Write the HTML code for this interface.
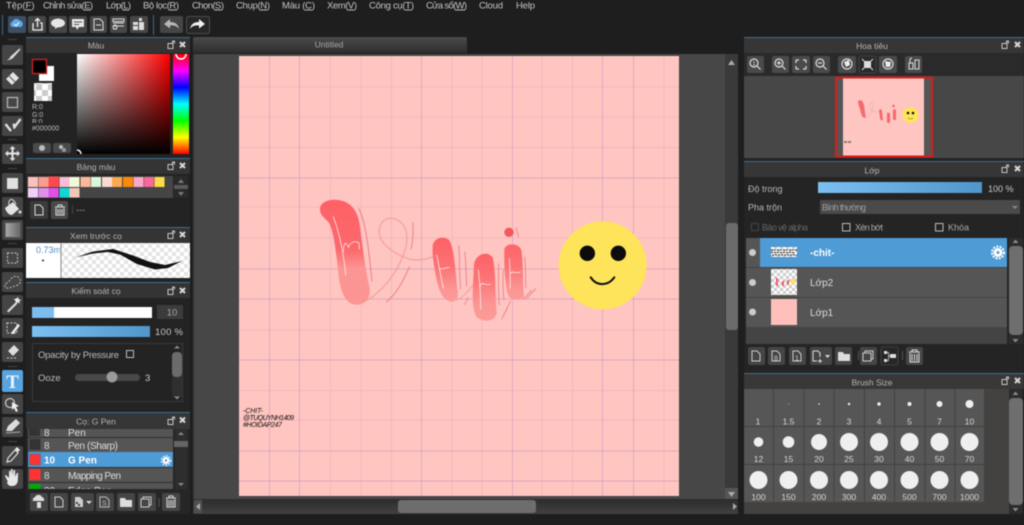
<!DOCTYPE html>
<html lang="vi"><head><meta charset="utf-8"><title>Untitled</title>
<style>
html,body{margin:0;padding:0;background:#1e1e1e;width:1024px;height:525px;overflow:hidden}
svg{display:block}
#root{filter:blur(.5px)}
text{font-family:"Liberation Sans",sans-serif;font-size:9px;fill:#bdbdbd}
.m{font-size:9.5px;fill:#c4c4c4}
.t{text-anchor:middle;fill:#b5b5b5;font-size:8.5px}
.c{text-anchor:middle;fill:#d8d8d8;font-size:8.5px}
</style></head><body>
<svg id="root" width="1024" height="525" viewBox="0 0 1024 525" xmlns="http://www.w3.org/2000/svg">
<defs>
<linearGradient id="sv1"><stop offset="0" stop-color="#fff"/><stop offset="1" stop-color="#f00"/></linearGradient>
<linearGradient id="sv2" x2="0" y2="1"><stop offset="0" stop-color="#000" stop-opacity="0"/><stop offset="1" stop-color="#000"/></linearGradient>
<linearGradient id="hue" x2="0" y2="1"><stop offset="0" stop-color="#f00"/><stop offset=".167" stop-color="#f0f"/><stop offset=".333" stop-color="#00f"/><stop offset=".5" stop-color="#0ff"/><stop offset=".667" stop-color="#0f0"/><stop offset=".833" stop-color="#ff0"/><stop offset="1" stop-color="#f00"/></linearGradient>
<linearGradient id="blue"><stop offset="0" stop-color="#7cc0f2"/><stop offset="1" stop-color="#4f96cc"/></linearGradient>
<linearGradient id="tab" x2="0" y2="1"><stop offset="0" stop-color="#4a4a4a"/><stop offset="1" stop-color="#2e2e2e"/></linearGradient>
<linearGradient id="hs" x2="0" y2="1"><stop offset="0" stop-color="#2c2c2c"/><stop offset="1" stop-color="#414141"/></linearGradient>
<linearGradient id="gr"><stop offset="0" stop-color="#aaa"/><stop offset="1" stop-color="#666"/></linearGradient>
<linearGradient id="stroke1" gradientUnits="userSpaceOnUse" x1="0" y1="30" x2="0" y2="342"><stop offset="0" stop-color="#fe6166"/><stop offset=".48" stop-color="#fc6a6d"/><stop offset=".66" stop-color="#fb9694"/><stop offset="1" stop-color="#fb9492"/></linearGradient>
<linearGradient id="stroke2" gradientUnits="userSpaceOnUse" x1="0" y1="140" x2="0" y2="340"><stop offset="0" stop-color="#fe6065"/><stop offset=".45" stop-color="#fc7375"/><stop offset=".8" stop-color="#fb9694"/><stop offset="1" stop-color="#fb9c99"/></linearGradient>
<linearGradient id="stroke3" gradientUnits="userSpaceOnUse" x1="0" y1="185" x2="0" y2="395"><stop offset="0" stop-color="#fe6065"/><stop offset=".4" stop-color="#fc7577"/><stop offset=".75" stop-color="#fb9694"/><stop offset="1" stop-color="#fb9c99"/></linearGradient>
<pattern id="ck" width="12" height="12" patternUnits="userSpaceOnUse"><rect width="12" height="12" fill="#fff"/><rect width="6" height="6" fill="#ccc"/><rect x="6" y="6" width="6" height="6" fill="#ccc"/></pattern>
<pattern id="ck2" width="8" height="8" patternUnits="userSpaceOnUse"><rect width="8" height="8" fill="#fff"/><rect width="4" height="4" fill="#e4e4e4"/><rect x="4" y="4" width="4" height="4" fill="#e4e4e4"/></pattern>
<pattern id="ck3" width="6" height="6" patternUnits="userSpaceOnUse"><rect width="6" height="6" fill="#fff"/><rect width="3" height="3" fill="#ccc"/><rect x="3" y="3" width="3" height="3" fill="#ccc"/></pattern>
</defs>

<rect width="1024" height="525" fill="#1e1e1e"/>

<!-- menu -->
<g class="menu">
<text class="m" x="6" y="8.5">Tệp(<tspan text-decoration="underline">F</tspan>)</text>
<text class="m" x="43" y="8.5" textLength="50">Chỉnh sửa(<tspan text-decoration="underline">E</tspan>)</text>
<text class="m" x="106" y="8.5" textLength="25">Lớp(<tspan text-decoration="underline">L</tspan>)</text>
<text class="m" x="143" y="8.5" textLength="36">Bộ lọc(<tspan text-decoration="underline">R</tspan>)</text>
<text class="m" x="192" y="8.5" textLength="32">Chọn(<tspan text-decoration="underline">S</tspan>)</text>
<text class="m" x="236" y="8.5" textLength="34">Chụp(<tspan text-decoration="underline">N</tspan>)</text>
<text class="m" x="282" y="8.5" textLength="33">Màu (<tspan text-decoration="underline">C</tspan>)</text>
<text class="m" x="327" y="8.5" textLength="30">Xem(<tspan text-decoration="underline">V</tspan>)</text>
<text class="m" x="369" y="8.5" textLength="45">Công cụ(<tspan text-decoration="underline">T</tspan>)</text>
<text class="m" x="426" y="8.5" textLength="41">Cửa sổ(<tspan text-decoration="underline">W</tspan>)</text>
<text class="m" x="479" y="8.5" textLength="24">Cloud</text>
<text class="m" x="516" y="8.5" textLength="19">Help</text>
</g>

<!-- top toolbar -->
<g fill="#464646">
<rect x="8" y="16" width="18" height="17" rx="2" fill="#3c4f63"/>
<rect x="28" y="16" width="18" height="17" rx="2"/>
<rect x="49" y="16" width="18" height="17" rx="2"/>
<rect x="69" y="16" width="18" height="17" rx="2"/>
<rect x="90" y="16" width="17" height="17" rx="2"/>
<rect x="110" y="16" width="17" height="17" rx="2"/>
<rect x="130" y="16" width="18" height="17" rx="2"/>
<rect x="160" y="16" width="23" height="17" rx="2"/>
<rect x="186.500" y="16.500" width="23" height="17" rx="2" fill="#262626" stroke="#5a5a5a" stroke-width=".8"/>
</g>
<rect x="2" y="15" width="1" height="20" fill="#3f6c8c"/><rect x="153" y="15" width="1" height="20" fill="#3f6c8c"/>
<path d="M12 27a3 3 0 0 1 .5-5.500a4 4 0 0 1 7-1a3.500 3.500 0 0 1 1.500 6.500z" fill="#5fa9e6"/><path d="M14 24l2 2 3-3.500" stroke="#fff" fill="none"/>
<path d="M33 23v7h9v-7h-2M37.500 27v-8M35 21l2.500-2.500L40 21" stroke="#eee" stroke-width="1.300" fill="none"/>
<ellipse cx="58" cy="23" rx="7" ry="4.500" fill="#e6e6e6"/><path d="M55 26l0 3 3-2z" fill="#e6e6e6"/>
<path d="M72 19h12v8h-5l-2 3-1-3h-4z" fill="#e6e6e6"/><path d="M74 22h8M74 24.500h5" stroke="#555"/>
<path d="M94 19h6l3 3v8h-9z" fill="none" stroke="#ddd"/><path d="M96 25h5" stroke="#ddd"/>
<path d="M113 19h11v2.500h-11zM113 23h11M113 26h11M113 29h4" stroke="#ddd" fill="none"/><circle cx="115" cy="27" r="2" fill="none" stroke="#ddd"/>
<path d="M133 22h5v3h-5zM139 22h5v8h-5zM133 26h5v4h-5zM139 18h3v3h-3z" fill="#ddd"/>
<path d="M164 24l6-5v3c5 0 8 2 9 7c-2-3-5-4-9-3.500v3z" fill="#b9b9b9"/>
<path d="M205 24l-6-5v3c-5 0-8 2-9 7c2-3 5-4 9-3.500v3z" fill="#f0f0f0"/>

<!-- left tools -->
<g fill="#454545">
<rect x="2" y="45" width="21" height="20" rx="2"/><rect x="2" y="69" width="21" height="20" rx="2"/><rect x="2" y="92" width="21" height="20" rx="2"/><rect x="2" y="116" width="21" height="20" rx="2"/>
<rect x="2" y="144" width="21" height="20" rx="2"/><rect x="2" y="173" width="21" height="20" rx="2"/><rect x="2" y="197" width="21" height="20" rx="2"/><rect x="2" y="220" width="21" height="20" rx="2"/>
<rect x="2" y="248" width="21" height="20" rx="2"/><rect x="2" y="272" width="21" height="20" rx="2"/><rect x="2" y="295" width="21" height="20" rx="2"/><rect x="2" y="318" width="21" height="20" rx="2"/><rect x="2" y="342" width="21" height="20" rx="2"/>
<rect x="2" y="370" width="21" height="22" rx="2" fill="#58a4e0"/>
<rect x="2" y="394" width="21" height="20" rx="2"/><rect x="2" y="417" width="21" height="20" rx="2"/><rect x="2" y="446" width="21" height="20" rx="2"/><rect x="2" y="469" width="21" height="20" rx="2"/>
</g>
<g fill="#444"><rect x="8" y="39" width="9" height="1"/><rect x="8" y="139" width="9" height="1"/><rect x="8" y="168" width="9" height="1"/><rect x="8" y="243" width="9" height="1"/><rect x="8" y="366" width="9" height="1"/><rect x="8" y="441" width="9" height="1"/></g>
<path d="M7 60c2-1 3-2 3.500-3.500l9-8 1 1-8 9c-1.500.5-3.500 2-5.500 1.500z" fill="#ddd"/>
<path d="M6 79l7-7 6 6-7 7z" fill="#e4e4e4"/><path d="M9 76l6 6" stroke="#555"/>
<rect x="7.500" y="97.500" width="10" height="10" fill="none" stroke="#bbb" stroke-width="1.200"/>
<path d="M5.500 124l5.500 7M13.500 128.500l7-9.500" stroke="#ddd" stroke-width="2.400" fill="none"/><circle cx="14" cy="125" r="1.500" fill="#ddd"/>
<path d="M12.500 146l3 3h-2v3.500h3.500v-2l3 3-3 3v-2h-3.500v3.500h2l-3 3-3-3h2v-3.500h-3.500v2l-3-3 3-3v2h3.500v-3.500h-2z" fill="#e4e4e4"/>
<rect x="7" y="178" width="11" height="11" fill="#e0e0e0"/>
<path d="M5 208l8-6 6 7-7 6c-3 0-6-3-7-7z" fill="#e4e4e4"/><path d="M9 205c-1-5 2-6 3-5.500s3 2 4 5" stroke="#ddd" fill="none"/>
<circle cx="20" cy="212" r="1.500" fill="#ddd"/>
<rect x="5.500" y="223" width="14.500" height="14" fill="url(#gr)" stroke="#777" stroke-width=".6"/>
<rect x="7.500" y="253" width="10" height="10" fill="none" stroke="#ccc" stroke-dasharray="2 1.500"/>
<path d="M5 287c-1-3 4-5 6-8s6-4 8-1 2 4 0 6-5 2-7 3-5 2-7 0z" fill="none" stroke="#bbb" stroke-dasharray="2 1.500"/>
<path d="M7 311l9-9 1.500 1.500-9 9z" fill="#ddd"/><path d="M18 297l.8 2.500 2.500.3-2 1.500.5 2.500-2-1.500-2 1-.2-2.500-2-1.500 2.500-.7z" fill="#eee"/>
<rect x="7" y="323" width="10" height="10" fill="none" stroke="#ccc" stroke-dasharray="2 1.500"/><path d="M11 333l7-9 2 1.500-7 9z" fill="#eee"/>
<path d="M8 351l6-6 5 5-6 6z" fill="#ddd"/><path d="M7 358h10" stroke="#ccc" stroke-dasharray="2 1.500"/>
<text x="12.500" y="388" text-anchor="middle" style="font-family:'Liberation Serif',serif;font-size:19px;font-weight:bold;fill:#eaf4fb">T</text>
<circle cx="10" cy="403" r="4.500" fill="none" stroke="#ccc" stroke-width="1.200"/><path d="M12 402l7 4-3 1 2 4-2 1-2-4-2 2z" fill="#eee"/>
<path d="M6 431l2-5 8-7 4 4-8 8z" fill="#ddd"/><path d="M6 433l14-1" stroke="#aaa"/>
<path d="M7 462l1-4 7-8 3 3-7 8z" fill="none" stroke="#ddd" stroke-width="1.200"/><path d="M15 449l2-2 3 3-2 2z" fill="#eee"/>
<path d="M8 482l-3-6 1-1 3 3v-7h1.500v5l.5-7h1.500l.5 7 .5-6h1.500l.3 7 1.500-4h1.300l-.3 8c-1 4-3 5-6 5s-4-1-5-4z" fill="#e8e8e8"/>

<!-- left panels -->
<rect x="26" y="37" width="164" height="122" fill="#232323"/>
<rect x="26" y="37" width="164" height="1" fill="#3d6d8d"/><rect x="26" y="38" width="164" height="15" fill="#343434"/>
<text class="t" x="96" y="48.500">Màu</text>
<rect x="39" y="66" width="15" height="15" fill="#fff"/><rect x="32.500" y="59.500" width="14" height="14" fill="#000" stroke="#c92020" stroke-width="1.400"/>
<rect x="34" y="83" width="18" height="18" fill="url(#ck)"/>
<text x="32" y="109" style="font-size:7px">R:0</text><text x="32" y="117" style="font-size:7px">G:0</text><text x="32" y="124" style="font-size:7px">B:0</text>
<rect x="30" y="123" width="40" height="8" fill="#232323"/><text x="32" y="130.500" style="font-size:7px">#000000</text>
<rect x="77" y="54" width="93" height="100" fill="url(#sv1)"/><rect x="77" y="54" width="93" height="100" fill="url(#sv2)"/>
<path d="M77 150a4 4 0 0 1 4 4" stroke="#fff" stroke-width="1.500" fill="none"/>
<rect x="173" y="54" width="16" height="100" fill="url(#hue)"/>
<path d="M176 54a5 5 0 0 0 10 0" stroke="#fff" stroke-width="1.500" fill="none"/>
<rect x="33" y="143" width="18" height="10" rx="2" fill="#4a4a4a"/><rect x="53" y="143" width="18" height="10" rx="2" fill="#4a4a4a"/>
<circle cx="42" cy="148" r="3" fill="#bbb"/><circle cx="61" cy="147" r="2" fill="#bbb"/><circle cx="64" cy="150" r="2" fill="#999"/>

<rect x="26" y="158" width="164" height="69" fill="#232323"/>
<rect x="26" y="158" width="164" height="1" fill="#3d6d8d"/><rect x="26" y="159" width="164" height="15" fill="#343434"/>
<text class="t" x="96" y="170">Bảng màu</text>
<rect x="27" y="176" width="146" height="22" fill="#454545"/>
<g>
<rect x="28" y="177" width="10" height="10" fill="#fcc0bb"/><rect x="38.500" y="177" width="10" height="10" fill="#fb9c90"/><rect x="48.500" y="176.500" width="10.500" height="10.500" fill="#fa4a4e"/><rect x="59.500" y="177" width="10" height="10" fill="#f8bcd8"/><rect x="69.500" y="177" width="10" height="10" fill="#f0f8d8"/><rect x="80.500" y="177" width="10" height="10" fill="#fbb898"/><rect x="91" y="177" width="10" height="10" fill="#d8f8d8"/><rect x="102" y="177" width="10" height="10" fill="#fbd8d0"/><rect x="112" y="177" width="10" height="10" fill="#fba850"/><rect x="123" y="177" width="10" height="10" fill="#fb8a08"/><rect x="133.500" y="177" width="10" height="10" fill="#f8a8c8"/><rect x="144" y="177" width="10" height="10" fill="#f86898"/><rect x="154.500" y="177" width="10" height="10" fill="#fbdc48"/>
<rect x="28" y="188" width="10" height="9.500" fill="#f0d0f8"/><rect x="38.500" y="188" width="10" height="9.500" fill="#e090e8"/><rect x="48.500" y="188" width="10" height="9.500" fill="#e050e8"/><rect x="59.500" y="188" width="10" height="9.500" fill="#10d8d0"/><rect x="69.500" y="188" width="10" height="9.500" fill="#f0c8b8"/>
</g>
<rect x="174" y="176" width="14" height="22" fill="#2a2a2a"/><path d="M178 183l3-4 3 4z" fill="#777"/><rect x="174" y="185" width="14" height="4" fill="#5a5a5a"/><path d="M178 192l3 4 3-4z" fill="#777"/>
<rect x="30" y="201" width="18" height="18" rx="2" fill="#3b3b3b"/><rect x="51" y="201" width="17" height="18" rx="2" fill="#4a4a4a"/>
<path d="M35 205h5l3 3v7h-8z" fill="none" stroke="#ddd"/>
<path d="M55 207h10M56 208v7h8v-7M58 209v5M60 209v5M62 209v5M58 207v-2h4v2" stroke="#ddd" fill="none"/>
<rect x="72" y="205" width="1" height="9" fill="#444"/><text x="76" y="213" style="fill:#999">---</text>

<rect x="26" y="227" width="164" height="1" fill="#3d6d8d"/><rect x="26" y="228" width="164" height="15" fill="#343434"/>
<text class="t" x="96" y="239">Xem trước cọ</text>
<rect x="26" y="243" width="164" height="35" fill="url(#ck2)"/><rect x="26" y="243" width="34.500" height="35" fill="#fff"/><rect x="60.500" y="243" width="1" height="35" fill="#888"/>
<svg x="26" y="243" width="34" height="35"><text x="10" y="10" style="fill:#4f8fc6;font-size:9px">0.73mm</text></svg>
<circle cx="43" cy="260.500" r="1" fill="#222"/>
<path d="M75 257.500L93 251.500L113 249L133 255.500L150 262L165 265L182 261L168 268L155 269.500L137 264L120 254.500L108 252L93 253.500Z" fill="#111"/>
<rect x="26" y="278" width="164" height="4" fill="#232323"/>

<rect x="26" y="282" width="164" height="130" fill="#232323"/>
<rect x="26" y="282" width="164" height="1" fill="#3d6d8d"/><rect x="26" y="283" width="164" height="15" fill="#343434"/>
<text class="t" x="96" y="294">Kiểm soát cọ</text>
<rect x="32" y="307" width="120" height="11" fill="#fff"/><rect x="32" y="307" width="22" height="11" fill="#7cbcef"/>
<rect x="157" y="305" width="26" height="14" fill="#3c3c3c"/><text x="172" y="315.500" text-anchor="middle" style="fill:#a8a8a8;font-size:9.500px">10</text>
<rect x="32" y="326" width="118" height="11" fill="url(#blue)"/><text x="155" y="335" style="fill:#c8c8c8;font-size:9.500px" textLength="28">100 %</text>
<rect x="32.500" y="343.500" width="150" height="58" fill="none" stroke="#3a3a3a"/>
<text x="38" y="358" style="font-size:9.500px;fill:#bbb" textLength="81">Opacity by Pressure</text>
<rect x="126.500" y="350.500" width="7" height="7" fill="none" stroke="#bbb"/>
<text x="38" y="381" style="font-size:9.500px;fill:#bbb">Ooze</text>
<rect x="75" y="374" width="65" height="7" rx="3.500" fill="#484848"/><circle cx="112" cy="377" r="5.500" fill="#9a9a9a"/>
<text x="145" y="381" style="font-size:9.500px;fill:#ccc">3</text>
<path d="M174 348.500l3-3 3 3z" fill="#888"/><rect x="172" y="352" width="10" height="46" rx="4" fill="#2f2f2f"/><rect x="172" y="352" width="10" height="25" rx="4" fill="#6b6b6b"/><path d="M174 396.500l3 3 3-3z" fill="#888"/>

<rect x="26" y="412" width="164" height="102" fill="#262626"/>
<rect x="26" y="412" width="164" height="1" fill="#3d6d8d"/><rect x="26" y="413" width="164" height="16" fill="#363636"/>
<text class="t" x="96" y="424.500">Cọ: G Pen</text>
<rect x="28" y="429" width="145" height="60" fill="#555"/>
<svg x="28" y="429" width="145" height="60">
<rect x="1" y="-4" width="11" height="11" fill="#333"/>
<text x="16" y="7" style="font-size:10px;fill:#ddd">8</text><text x="40" y="7" style="font-size:10px;fill:#ddd">Pen</text>
<rect y="8" width="145" height="1" fill="#2e2e2e"/>
<rect x="1.500" y="10" width="11" height="11" fill="#333"/>
<text x="16" y="20" style="font-size:10px;fill:#ddd">8</text><text x="40" y="20" style="font-size:10px;fill:#ddd" textLength="50">Pen (Sharp)</text>
<rect y="23" width="145" height="15" fill="#4f9bd6"/>
<rect x="1.500" y="25" width="11" height="11" fill="#f33" stroke="#2a6ea8" stroke-width=".5"/>
<text x="16" y="34.500" style="font-size:10px;fill:#fff;font-weight:bold">10</text><text x="40" y="34.500" style="font-size:10px;fill:#fff;font-weight:bold">G Pen</text>
<rect y="38" width="145" height="1" fill="#2e2e2e"/>
<rect x="1.500" y="40" width="11" height="11" fill="#f33"/>
<text x="16" y="50" style="font-size:10px;fill:#ddd">8</text><text x="40" y="50" style="font-size:10px;fill:#ddd" textLength="53">Mapping Pen</text>
<rect y="53" width="145" height="1" fill="#2e2e2e"/>
<rect x="1.500" y="55" width="11" height="11" fill="#0a0"/>
<text x="16" y="65" style="font-size:10px;fill:#ddd">20</text><text x="40" y="65" style="font-size:10px;fill:#ddd">Edge Pen</text>
</svg>
<circle cx="166" cy="460.500" r="3.500" fill="#fff"/><circle cx="166" cy="460.500" r="4.500" fill="none" stroke="#fff" stroke-width="1.400" stroke-dasharray="1.500 1.500"/><circle cx="166" cy="460.500" r="1.200" fill="#4f9bd6"/>
<rect x="175" y="429" width="12" height="60" fill="#2e2e2e"/><path d="M178 435l3-3 3 3z" fill="#888"/><rect x="174" y="441" width="14" height="6" fill="#666"/><path d="M178 483l3 3 3-3z" fill="#888"/>
<g fill="#454545"><rect x="30" y="493" width="18" height="18" rx="2"/><rect x="50" y="493" width="18" height="18" rx="2"/><rect x="71" y="493" width="23" height="18" rx="2"/><rect x="96" y="493" width="18" height="18" rx="2"/><rect x="117" y="493" width="18" height="18" rx="2"/><rect x="138" y="493" width="18" height="18" rx="2"/><rect x="162" y="493" width="18" height="18" rx="2"/></g>
<path d="M33 501a3 3 0 0 1 2-4 4 4 0 0 1 7 0 3 3 0 0 1 2 4zM37 502h4v6h-4z" fill="#ddd"/>
<path d="M55 497h5l3 3v7h-8z" fill="none" stroke="#ccc"/>
<path d="M75 497h5l3 3v7h-8z" fill="#ccc"/><path d="M76 502h2v2h-2zM78 504h2v2h-2z" fill="#444"/><path d="M86 501h6l-3 3z" fill="#ddd"/>
<path d="M100 497h6l3 3v7h-9z" fill="none" stroke="#bbb"/><text x="102" y="505.500" style="font-size:7px">S</text>
<path d="M120 498h5l1 2h6v7h-12z" fill="#ddd"/>
<rect x="141" y="499" width="8" height="8" fill="none" stroke="#ccc"/><path d="M143 499v-2h8v8h-2" fill="none" stroke="#ccc"/>
<path d="M166 498h10M167 499v8h8v-8M169 500v6M171 500v6M173 500v6M169 498v-2h4v2" stroke="#ddd" fill="none"/>
<rect x="158.500" y="498" width="1" height="9" fill="#555"/>

<!-- center -->
<path d="M193 39q0-2 2-2h270q2 0 2 2v14h-274z" fill="url(#tab)"/>
<text x="329" y="47.500" text-anchor="middle" style="fill:#a8a8a8;font-size:8.500px">Untitled</text>
<rect x="193" y="54" width="545" height="445" fill="#474747"/>
<rect x="239" y="56" width="440" height="440" fill="#ffc5c0"/>
<!-- grid -->
<g stroke="#e6a8b8" stroke-width=".8" opacity=".55">
<path d="M330.500 56v440M361 56v440M391.500 56v440M452 56v440M482 56v440M542 56v440M572.500 56v440M664 56v440"/>
<path d="M239 87h440M239 117h440M239 147.500h440M239 207h440M239 238h440M239 330h440M239 390.500h440M239 420h440"/>
</g>
<g stroke="#d8a2c2" stroke-width=".9" opacity=".85">
<path d="M269.500 56v440M299.500 56v440M421.500 56v440M512.500 56v440M602.500 56v440M633.500 56v440"/>
<path d="M239 178h440M239 269h440M239 299h440M239 360h440M239 451h440M239 481h440"/>
</g>
<!-- artwork -->
<g transform="translate(300 190) scale(.33333)">
<path d="M170 342C215 335 290 270 318 170C330 110 300 85 270 85C245 85 232 115 240 140C250 170 290 195 330 208C355 212 385 208 402 198" fill="none" stroke="#f2a0a0" stroke-width="3.500"/>
<path d="M60 60C58 38 85 26 115 30C152 36 174 60 180 110C187 170 197 240 208 290C214 324 196 344 170 344C138 344 123 310 116 260C110 200 103 130 88 100C78 85 62 80 60 60Z" fill="url(#stroke1)"/>
<path d="M176 55C195 90 205 160 216 275" fill="none" stroke="#ee7080" stroke-width="2.500"/>
<path d="M338 97C342 130 338 155 333 178M328 230C310 275 285 315 258 337" fill="none" stroke="#ec7684" stroke-width="2.500"/>
<path d="M100 80C115 120 130 180 137 255M130 185C131 160 137 150 145 172C150 160 160 150 176 158C178 165 178 172 178 178" fill="none" stroke="#fff" stroke-width="2" stroke-linecap="round"/>
<path d="M398 170C398 148 425 135 445 148C462 165 465 230 472 300C476 325 470 335 452 335C428 330 415 300 408 260C402 225 396 195 398 170Z" fill="url(#stroke2)"/>
<path d="M476 165C480 210 478 260 482 298M495 185C498 220 498 255 500 290" fill="none" stroke="#ee7a85" stroke-width="2.500"/>
<path d="M410 195C418 230 425 275 430 295M418 238L448 232" fill="none" stroke="#fff" stroke-width="2" stroke-linecap="round"/>
<path d="M468 330C490 325 505 300 525 280" fill="none" stroke="#f09a9c" stroke-width="2.500"/>
<path d="M505 322L493 345" fill="none" stroke="#ee7080" stroke-width="2"/>
<path d="M522 225C525 195 560 178 578 203C588 240 585 310 590 370C585 395 548 400 528 378C512 345 520 280 522 225Z" fill="url(#stroke3)"/>
<path d="M596 220C596 260 594 300 598 345M610 240C608 280 610 320 612 330" fill="none" stroke="#ee7a85" stroke-width="2.500"/>
<path d="M632 332L605 388M622 355L608 382" fill="none" stroke="#ee7080" stroke-width="2"/>
<path d="M535 240C540 280 542 330 542 358M540 290C545 270 555 290 572 282" fill="none" stroke="#fff" stroke-width="2" stroke-linecap="round"/>
<path d="M613 178C618 158 655 158 664 180C670 225 668 280 672 322C650 335 628 332 622 308C614 270 612 220 613 178Z" fill="url(#stroke2)"/>
<circle cx="627" cy="127" r="14" fill="#f2585c"/>
<path d="M648 112L656 142M674 200C678 240 676 270 678 295M708 295L680 325M695 300L670 328" fill="none" stroke="#ee7080" stroke-width="2.200"/>
<path d="M628 205C630 240 632 270 630 295M632 250C640 240 650 255 662 245" fill="none" stroke="#fff" stroke-width="2" stroke-linecap="round"/>
<circle cx="908" cy="226" r="132" fill="#fee45a"/>
<circle cx="862" cy="190" r="23" fill="#0c0c0c"/><circle cx="955" cy="190" r="23" fill="#0c0c0c"/>
<path d="M872 262C890 290 925 288 943 262" fill="none" stroke="#111" stroke-width="6" stroke-linecap="round"/>
</g>
<g style="font-style:italic">
<text x="243" y="413" style="font-size:7px;fill:#111" textLength="20">-CHIT-</text>
<text x="243" y="420" style="font-size:7px;fill:#111" textLength="51">@TUQUYNH1409</text>
<text x="243" y="427" style="font-size:7px;fill:#111" textLength="39">#HOIDAP247</text>
</g>
<rect x="193" y="54" width="1.500" height="445" fill="#3d3d3d"/>
<!-- vscroll -->
<rect x="725" y="54" width="13" height="445" fill="#3a3a3a"/>
<path d="M728 65l3.500-5 3.500 5z" fill="#aaa"/>
<rect x="726" y="223" width="12" height="107" rx="3" fill="#6b6b6b"/>
<rect x="725" y="488" width="13" height="11" fill="#555"/><path d="M728 492l3.500 5 3.500-5z" fill="#aaa"/>
<!-- hscroll -->
<rect x="193" y="499" width="545" height="15" fill="url(#hs)"/>
<rect x="194" y="500" width="8" height="13" fill="#505050"/><path d="M200 503l-4 3.500 4 3.500z" fill="#aaa"/>
<rect x="398" y="500" width="138" height="13" rx="3" fill="#6d6d6d"/>
<path d="M733 503l4 3.500-4 3.500z" fill="#aaa"/>

<!-- right: navigator -->
<rect x="744" y="37" width="280" height="1" fill="#3d6d8d"/><rect x="744" y="38" width="280" height="15" fill="#363636"/>
<text class="t" x="872" y="49">Hoa tiêu</text>
<rect x="744" y="53" width="280" height="23" fill="#2a2a2a"/>
<g fill="#4a4a4a"><rect x="747" y="56" width="17" height="17" rx="2"/><rect x="772" y="56" width="17" height="17" rx="2"/><rect x="792" y="56" width="18" height="17" rx="2"/><rect x="813" y="56" width="17" height="17" rx="2"/><rect x="838" y="56" width="18" height="17" rx="2"/><rect x="859" y="56" width="17" height="17" rx="2" fill="#2a2a2a" stroke="#555" stroke-width=".6"/><rect x="879" y="56" width="18" height="17" rx="2"/><rect x="905" y="56" width="17" height="17" rx="2"/></g>
<g fill="none" stroke="#ddd" stroke-width="1.200"><circle cx="754" cy="63" r="4"/><path d="M757 66l3.500 3.500"/><circle cx="779" cy="63" r="4"/><path d="M782 66l3.500 3.500M777 63h4M779 61v4"/><circle cx="820" cy="63" r="4"/><path d="M823 66l3.500 3.500M818 63h4"/><path d="M796 60h3M796 60v3M806 60h-3M806 60v3M796 69h3M796 69v-3M806 69h-3M806 69v-3"/><circle cx="847" cy="64" r="5"/><circle cx="888" cy="64" r="5"/></g>
<text x="754" y="65.500" text-anchor="middle" style="font-size:6px;fill:#ddd">1</text>
<path d="M844 62l5-2 1 5-4 2z" fill="#eee"/><rect x="864" y="61" width="7" height="7" fill="#ddd"/><path d="M862 59l3 3M873 59l-3 3M862 70l3-3M873 70l-3-3" stroke="#ddd"/><path d="M885 61l6 1-1 5-4 0z" fill="#eee"/><path d="M909 69v-6h4v6zM915 69v-9h4v9z" fill="none" stroke="#ddd"/><path d="M910 63v-3q0-2 2-2" stroke="#ddd" fill="none"/>
<rect x="744" y="76" width="280" height="82" fill="#474747"/>
<rect x="836" y="77.500" width="96" height="79" fill="#555" stroke="#d81c1c" stroke-width="2"/>
<rect x="843" y="78.500" width="81" height="77" fill="#ffc5c0"/>
<g transform="translate(843 86)">
<path d="M15 15c3-2 5 0 6 4 1 5 1 10 2 12-2 2-4 0-5-4-1-5-3-8-3-12z" fill="#f56a6f"/>
<path d="M24 32c3-3 7-10 6-14-2-3-5 0-3 4 2 3 5 4 8 4" stroke="#f6b0ae" fill="none" stroke-width=".8"/>
<path d="M36 24c1-1 3-1 3 1l1 9c-1 1-3 0-3-2zM44 27c1-1 3 0 3 1v8c-1 2-3 1-3-1zM50 24c1-1 3-1 3 0v10c-1 0-3 0-3-1z" fill="#f6686d"/><circle cx="50.500" cy="20" r="1.200" fill="#f2585c"/>
</g>
<g transform="translate(843 81)">
<circle cx="67.500" cy="34" r="8" fill="#fee45a"/><circle cx="65" cy="32" r="1.300" fill="#111"/><circle cx="70" cy="32" r="1.300" fill="#111"/><path d="M65 37q2.500 2 5 0" stroke="#664" fill="none" stroke-width=".6"/>
<path d="M1 61h8" stroke="#8c7a72" stroke-width="2" stroke-dasharray="3 1"/>
</g>

<!-- right: layers -->
<rect x="744" y="158" width="280" height="215" fill="#242424"/>
<rect x="744" y="161" width="280" height="1" fill="#3d6d8d"/><rect x="744" y="162" width="280" height="15" fill="#363636"/>
<text class="t" x="872" y="173.500">Lớp</text>
<text x="748" y="192" style="fill:#b8b8b8">Độ trong</text>
<rect x="818" y="182" width="164" height="11" fill="url(#blue)"/>
<text x="988" y="192" style="fill:#c8c8c8">100 %</text>
<text x="748" y="210.500" style="fill:#b8b8b8">Pha trộn</text>
<rect x="820" y="200" width="200" height="14" fill="#4a4a4a"/><text x="822" y="210.500" style="fill:#a0a0a0" textLength="44">Bình thường</text><path d="M1012 206h6l-3 3z" fill="#888"/>
<rect x="751.500" y="223.500" width="7" height="7" fill="none" stroke="#444"/><text x="762" y="230.500" style="fill:#666" textLength="46">Bảo vệ alpha</text>
<rect x="842.500" y="223.500" width="7.500" height="7.500" fill="none" stroke="#bbb"/><text x="855" y="230.500" style="fill:#aaa" textLength="28">Xén bớt</text>
<rect x="935.500" y="223.500" width="7.500" height="7.500" fill="none" stroke="#bbb"/><text x="948" y="230.500" style="fill:#aaa">Khóa</text>
<rect x="746" y="238" width="261" height="106" fill="#444"/>
<rect x="746" y="238" width="261" height="29" fill="#555"/><rect x="760" y="238" width="247" height="29" fill="#4f9bd6"/>
<rect x="746" y="268" width="261" height="29" fill="#555"/><rect x="746" y="298" width="261" height="29" fill="#555"/>
<circle cx="752.500" cy="252.500" r="3.500" fill="#ccc"/><circle cx="752.500" cy="282.500" r="3.500" fill="#ccc"/><circle cx="752.500" cy="312" r="3.500" fill="#ccc"/>
<rect x="771" y="247" width="26" height="10" fill="url(#ck3)"/><path d="M771 250h26M771 252.500h24M772 255h25" stroke="#333" stroke-dasharray="2 1"/>
<rect x="771" y="269" width="26" height="26" fill="url(#ck3)"/><path d="M776 278h2v8h-2zM782 281h2v5h-2zM787 280h2v5h-2z" fill="#f4586a"/><rect x="791" y="279" width="4" height="5" fill="#fee45a"/>
<rect x="771" y="299" width="26" height="26" fill="#ffc0bb"/>
<text x="810" y="256" style="fill:#fff;font-size:10px;font-weight:bold">-chit-</text>
<text x="810" y="286" style="fill:#ddd;font-size:10px">Lớp2</text>
<text x="810" y="316" style="fill:#ddd;font-size:10px">Lớp1</text>
<circle cx="998" cy="252.500" r="4.500" fill="#fff"/><circle cx="998" cy="252.500" r="6" fill="none" stroke="#fff" stroke-width="2" stroke-dasharray="2 1.300"/><circle cx="998" cy="252.500" r="1.500" fill="#4f9bd6"/>
<rect x="1009" y="238" width="14" height="106" fill="#2c2c2c"/><path d="M1012.500 243l3-3.500 3 3.500z" fill="#888"/><rect x="1009" y="246" width="14" height="89" rx="4" fill="#6e6e6e"/><path d="M1012.500 339l3 3.500 3-3.500z" fill="#888"/>
<g fill="#454545"><rect x="748" y="347" width="17" height="18" rx="2"/><rect x="768" y="347" width="17" height="18" rx="2"/><rect x="789" y="347" width="17" height="18" rx="2"/><rect x="810" y="347" width="22" height="18" rx="2"/><rect x="835" y="347" width="17" height="18" rx="2"/><rect x="860" y="347" width="17" height="18" rx="2"/><rect x="881" y="347" width="17" height="18" rx="2" fill="#262626" stroke="#555" stroke-width=".6"/><rect x="906" y="347" width="17" height="18" rx="2"/></g>
<path d="M752 351h5l3 3v7h-8zM772 351h5l3 3v7h-8zM793 351h5l3 3v7h-8z" fill="none" stroke="#ccc"/><text x="774" y="360.500" style="font-size:7px;fill:#ccc">8</text><text x="795" y="360.500" style="font-size:7px;fill:#ccc">1</text>
<path d="M813 351h5l2 2v4M813 351v10h4M818 361h4M820 359v4" fill="none" stroke="#ddd"/><path d="M825 355h5l-2.500 3z" fill="#ddd"/>
<path d="M838 352h5l1 2h6v7h-12z" fill="#ddd"/>
<rect x="863" y="353" width="8" height="8" fill="none" stroke="#ccc"/><path d="M865 353v-2h8v8h-2" fill="none" stroke="#ccc"/>
<path d="M884 351h3v3h-3zM884 359h3v3h-3zM890 354h6v4h-6z" fill="#ddd"/><path d="M887 352.500h1.500v8H887M888.500 356h1.500" stroke="#ddd" fill="none" stroke-width=".7"/>
<path d="M909 352h11M910 353v9h9v-9M912 354v7M914.500 354v7M917 354v7M912 352v-2h5v2" stroke="#ddd" fill="none"/>
<rect x="858" y="351" width="1" height="9" fill="#555"/><rect x="902" y="351" width="1" height="9" fill="#555"/>

<!-- right: brush size -->
<rect x="744" y="373" width="280" height="1" fill="#3d6d8d"/><rect x="744" y="374" width="280" height="15" fill="#3a3836"/>
<text class="t" x="872" y="385.500">Brush Size</text>
<rect x="744" y="389" width="265" height="125" fill="#434240"/>
<g fill="#565656">
<rect x="744" y="389" width="29" height="37"/><rect x="774" y="389" width="29.500" height="37"/><rect x="804.500" y="389" width="29" height="37"/><rect x="834.500" y="389" width="29.500" height="37"/><rect x="865" y="389" width="29" height="37"/><rect x="895" y="389" width="29.500" height="37"/><rect x="925.500" y="389" width="29" height="37"/><rect x="955.500" y="389" width="28.500" height="37"/>
<rect x="744" y="427" width="29" height="37"/><rect x="774" y="427" width="29.500" height="37"/><rect x="804.500" y="427" width="29" height="37"/><rect x="834.500" y="427" width="29.500" height="37"/><rect x="865" y="427" width="29" height="37"/><rect x="895" y="427" width="29.500" height="37"/><rect x="925.500" y="427" width="29" height="37"/><rect x="955.500" y="427" width="28.500" height="37"/>
<rect x="744" y="465" width="29" height="37"/><rect x="774" y="465" width="29.500" height="37"/><rect x="804.500" y="465" width="29" height="37"/><rect x="834.500" y="465" width="29.500" height="37"/><rect x="865" y="465" width="29" height="37"/><rect x="895" y="465" width="29.500" height="37"/><rect x="925.500" y="465" width="29" height="37"/><rect x="955.500" y="465" width="28.500" height="37"/>
</g>
<g fill="#efefef">
<circle cx="758" cy="404" r=".3" opacity=".4"/><circle cx="788.500" cy="404" r=".6" opacity=".5"/><circle cx="819" cy="404" r=".8"/><circle cx="849" cy="404" r="1.200"/><circle cx="879" cy="404" r="1.700"/><circle cx="909.500" cy="404" r="2"/><circle cx="939.500" cy="404" r="3"/><circle cx="969.500" cy="404" r="4"/>
<circle cx="758.500" cy="442" r="4.800"/><circle cx="788.500" cy="442" r="5.800"/><circle cx="819" cy="442" r="8"/><circle cx="849" cy="442" r="9"/><circle cx="879" cy="442" r="9"/><circle cx="909.500" cy="442" r="9"/><circle cx="939.500" cy="442" r="9"/><circle cx="969.500" cy="442" r="9"/>
<circle cx="758.500" cy="480" r="9"/><circle cx="788.500" cy="480" r="9"/><circle cx="819" cy="480" r="9"/><circle cx="849" cy="480" r="9"/><circle cx="879" cy="480" r="9"/><circle cx="909.500" cy="480" r="9"/><circle cx="939.500" cy="480" r="9"/><circle cx="969.500" cy="480" r="9"/>
</g>
<text class="c" x="758" y="424.500">1</text><text class="c" x="788.500" y="424.500">1.5</text><text class="c" x="819" y="424.500">2</text><text class="c" x="849" y="424.500">3</text><text class="c" x="879" y="424.500">4</text><text class="c" x="909.500" y="424.500">5</text><text class="c" x="939.500" y="424.500">7</text><text class="c" x="969.500" y="424.500">10</text>
<text class="c" x="758.500" y="462">12</text><text class="c" x="788.500" y="462">15</text><text class="c" x="819" y="462">20</text><text class="c" x="849" y="462">25</text><text class="c" x="879" y="462">30</text><text class="c" x="909.500" y="462">40</text><text class="c" x="939.500" y="462">50</text><text class="c" x="969.500" y="462">70</text>
<text class="c" x="758.500" y="500">100</text><text class="c" x="788.500" y="500">150</text><text class="c" x="819" y="500">200</text><text class="c" x="849" y="500">300</text><text class="c" x="879" y="500">400</text><text class="c" x="909.500" y="500">500</text><text class="c" x="939.500" y="500">700</text><text class="c" x="969.500" y="500">1000</text>
<rect x="1009" y="389" width="14" height="125" fill="#2c2c2c"/><path d="M1012.500 395l3-3.500 3 3.500z" fill="#888"/><rect x="1009" y="398" width="14" height="107" rx="4" fill="#6e6e6e"/><path d="M1012.500 508l3 3.500 3-3.500z" fill="#888"/>

<!-- panel title icons -->
<g fill="none" stroke="#c4c4c4" stroke-width="1">
<path d="M168 43.500h5v5h-5zM171 44l3-3M172 41h2.500v2.500"/><path d="M168 164.500h5v5h-5zM171 165l3-3M172 162h2.500v2.500"/><path d="M168 233.500h5v5h-5zM171 234l3-3M172 231h2.500v2.500"/><path d="M168 289.500h5v5h-5zM171 290l3-3M172 287h2.500v2.500"/><path d="M168 419.500h5v5h-5zM171 420l3-3M172 417h2.500v2.500"/>
<path d="M1002 43.500h5v5h-5zM1005 44l3-3M1006 41h2.500v2.500"/><path d="M1002 167.500h5v5h-5zM1005 168l3-3M1006 165h2.500v2.500"/><path d="M1002 379.500h5v5h-5zM1005 380l3-3M1006 377h2.500v2.500"/>
</g>
<g stroke="#d8d8d8" stroke-width="2">
<path d="M180 42l5 5M185 42l-5 5M180 163l5 5M185 163l-5 5M180 232l5 5M185 232l-5 5M180 288l5 5M185 288l-5 5M180 417.500l5 5M185 417.500l-5 5"/>
<path d="M1015 42l5 5M1020 42l-5 5M1015 166l5 5M1020 166l-5 5M1015 378l5 5M1020 378l-5 5"/>
</g>
</svg>
</body></html>
